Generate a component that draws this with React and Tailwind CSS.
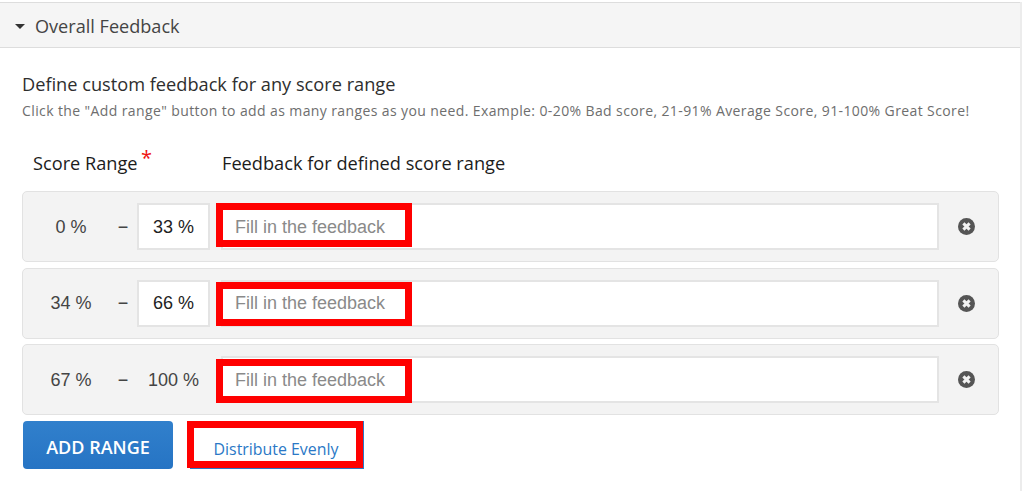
import React from "react";

const ranges = [
  { from: "0 %", to: "33 %", editable: true, markClass: "top-[-2px]" },
  { from: "34 %", to: "66 %", editable: true, markClass: "top-0" },
  { from: "67 %", to: "100 %", editable: false, markClass: "top-px" },
];

function RemoveIcon() {
  return (
    <svg width="17" height="17" viewBox="0 0 17 17" className="block">
      <circle cx="8.5" cy="8.5" r="8.5" fill="#555555" />
      <path d="M5.4 5.4 L11.6 11.6 M11.6 5.4 L5.4 11.6" stroke="#f2f2f2" strokeWidth="3" />
    </svg>
  );
}

function RangeRow({ range }) {
  return (
    <div className="flex items-center h-[71px] pl-[12px] bg-[#f3f3f3] border border-[#e2e2e2] rounded-[5px] font-['Liberation_Sans',sans-serif] text-[18px]">
      <div className="w-[72px] pt-px text-center text-[#444444]">{range.from}</div>
      <div className="w-[30px] pt-px pl-[2px] text-center text-[#444444]">−</div>
      {range.editable ? (
        <div className="w-[73px] h-[47px] pt-px flex items-center justify-center bg-white border-2 border-[#e4e4e4] text-[#222222]">
          {range.to}
        </div>
      ) : (
        <div className="w-[73px] pt-px text-center text-[#444444]">{range.to}</div>
      )}
      <div className="relative ml-[11px] w-[718px] h-[47px] pt-px flex items-center pl-[12px] bg-white border-2 border-[#e4e4e4] text-[#8a8a8a]">
        Fill in the feedback
        {/* red annotation over the field */}
        <div className={`absolute left-[-7px] w-[196px] h-[44px] border-[7px] border-[#ff0000] ${range.markClass}`}></div>
      </div>
      <div className="ml-[19px]">
        <RemoveIcon />
      </div>
    </div>
  );
}

export default function App() {
  return (
    <div className="w-[1024px] h-[491px] overflow-hidden bg-white pt-[2px] font-['Open_Sans',sans-serif]">
      <div className="w-[1022px] h-[489px] border-r-2 border-[#ececec]">
        <div className="flex items-center h-[46px] pl-[15px] pt-[3px] bg-[#f5f5f5] border-t border-b border-[#dddddd]">
          <span className="w-0 h-0 border-x-[5px] border-x-transparent border-t-[5px] border-t-[#333333]"></span>
          <span className="ml-[10px] text-[18.1px] text-[#444444]">Overall Feedback</span>
        </div>

        <div className="pl-[22px] pr-[22px]">
          <h2 className="mt-[23px] text-[18.2px] leading-[26px] font-medium text-[#2e2e2e]">
            Define custom feedback for any score range
          </h2>
          <p className="mt-[4px] text-[14px] leading-[20px] tracking-[0.39px] text-[#6e6e6e] whitespace-nowrap">
            Click the "Add range" button to add as many ranges as you need. Example: 0-20% Bad score, 21-91% Average Score, 91-100% Great Score!
          </p>

          <div className="flex items-center mt-[28px] h-[30px] text-[18.2px] font-medium text-[#1c1c1c]">
            <div className="relative w-[200px] pl-[11px]">
              Score Range
              <span className="absolute left-[119px] top-[-4px] text-[20px] leading-[24px] text-[#ee1111]">*</span>
            </div>
            <div>Feedback for defined score range</div>
          </div>

          <div className="flex flex-col gap-[5.5px] mt-[12px] w-[977px]">
            {ranges.map((range) => (
              <RangeRow key={range.from} range={range} />
            ))}
          </div>

          <div className="flex mt-[6px] ml-[1px]">
            <button className="w-[150px] h-[48px] pt-[4px] bg-gradient-to-b from-[#3180cc] to-[#2674c4] rounded-[4px] text-white text-[18px] font-semibold">
              ADD RANGE
            </button>
            <div className="relative ml-[17px] w-[174px] h-[48px] pt-[11px] flex items-center justify-center border-b-2 border-r-2 border-[#2a78c6] text-[15.9px] font-medium text-[#2a78c6]">
              Distribute Evenly
              <div className="absolute left-[-3px] top-0 w-[176px] h-[47px] border-[7px] border-[#ff0000]"></div>
            </div>
          </div>
        </div>
      </div>
    </div>
  );
}
